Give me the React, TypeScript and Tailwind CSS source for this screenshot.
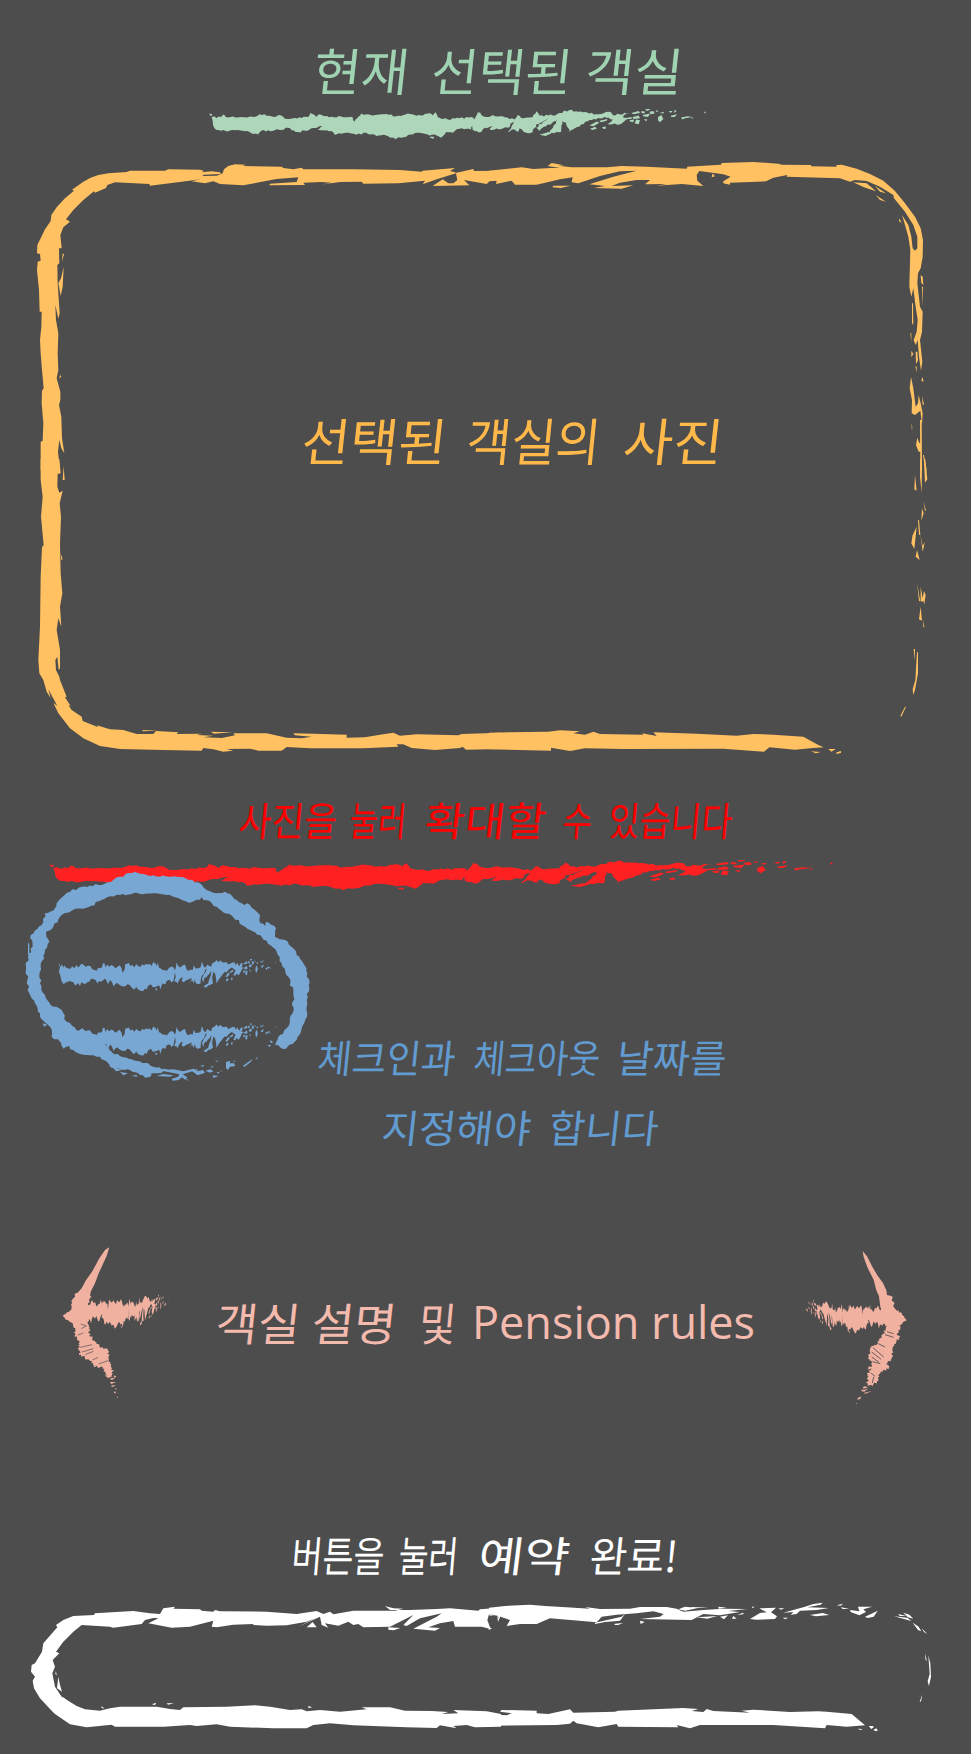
import React from "react";

/* Roughens a closed outline with a seeded jitter so edges look like chalk. */
function rough(points: string, amp: number, step: number, seed = 7): string {
  let s = seed;
  const rnd = () => {
    s = (s * 16807) % 2147483647;
    return s / 2147483647 - 0.5;
  };
  const pts = points.trim().split(/\s+/).map((p) => p.split(",").map(Number));
  const out: string[] = [];
  pts.forEach(([x, y], i) => {
    const [nx, ny] = pts[(i + 1) % pts.length];
    const len = Math.hypot(nx - x, ny - y);
    const n = Math.max(1, Math.round(len / step));
    for (let k = 0; k < n; k++) {
      const t = k / n;
      const off = k === 0 ? 0 : rnd() * amp * 2;
      out.push(
        `${(x + (nx - x) * t - ((ny - y) / (len || 1)) * off).toFixed(1)},${(y + (ny - y) * t + ((nx - x) / (len || 1)) * off).toFixed(1)}`
      );
    }
  });
  return out.join(" ");
}

const STROKE =
  "36,263 65,262 70,255 78,262 165,262 180,254 215,260 245,258 262,268 300,263 325,262 332,250 350,262 360,254 375,260 460,264 465,277 485,252 520,258 560,253 590,260 625,252 665,258 690,250 700,258 708,248 715,262 745,270 780,266 815,262 825,270 835,248 860,262 880,256 930,268 945,270 955,256 965,265 985,264 1000,262 1010,245 1020,258 1060,258 1080,250 1110,241 1150,248 1190,254 1235,248 1240,256 1290,250 1270,262 1300,264 1275,275 1260,285 1225,284 1240,270 1215,262 1190,270 1165,275 1120,300 1110,308 1100,280 1088,275 1085,308 1050,312 1075,270 1040,290 1020,305 1010,295 1045,265 1010,285 1000,308 980,310 960,296 955,308 945,300 925,308 950,270 925,295 870,300 880,290 850,300 845,308 820,302 825,275 815,300 780,298 760,310 740,308 725,325 705,315 690,318 660,310 640,315 620,322 590,328 560,318 530,320 500,310 470,316 440,310 405,316 395,305 355,300 370,290 330,300 295,308 265,295 240,302 185,304 175,315 130,304 50,302 40,285";

const STROKE_BITS =
  "M28 252l10 2-4 7zM1170 288l22-12 8 4-18 10zM1172 298l16-6 4 6-14 4zM1200 274l24-6-2 6-18 4zM1208 293l10-2 2 6-8 2zM1020 316l28-8 8 4-18 8zM1296 250l22-6 4 6-20 4zM1300 262l18-4 4 8-20 2zM1290 272l14-2-2 8-10-2zM1310 270l12 2-4 12-12-2zM1326 244l12 2-4 6-8-2zM1330 256l22-4-6 10-14-2zM1338 238l16-4-2 6-10 4zM1350 246l12-2 4 8-12 2zM1334 268l10 2-4 6zM1368 244l8-2-2 6zM1376 262l10-6 6 12-10 10-6-6zM1380 250l14-4-2 6zM1408 244l12 0-6 6zM1416 258l18-4-8 8-12 0zM1426 240l6 4-8 6zM1445 264l20-4 14 2-22 4-8 4zM1476 264l6 0-4 4zM1515 246l4 0 0 5-4 0zM580 324l12-2-4 8zM690 322l14 0-2 6-8-2z";

function Stroke({ className }: { className: string }) {
  return (
    <svg viewBox="28 238 1492 94" preserveAspectRatio="none" className={className} fill="currentColor">
      <polygon points={rough(STROKE, 3, 7)} />
      <path d={STROKE_BITS} />
    </svg>
  );
}

const FRAME_TL =
  "62,992 62,905 68,903 70,850 65,790 66,752 71,745 66,690 62,640 60,600 64,560 65,515 59,515 57,450 51,390 53,365 62,362 60,342 51,340 52,315 62,295 75,268 92,243 94,225 110,202 135,175 162,152 156,149 190,125 212,113 235,105 265,100 320,96 330,92 435,92 445,88 540,89 552,93 545,97 575,94 600,97 602,102 550,104 548,108 590,107 608,100 612,88 625,78 645,73 678,74 668,78 785,80 790,84 820,88 845,83 850,88 1000,88 1140,90 1205,95 1208,92 1305,84 1290,93 1310,98 1360,87 1362,93 1442,92 1442,130 1428,118 1410,122 1400,132 1332,120 1348,136 1238,138 1268,118 1285,130 1300,130 1312,120 1308,100 1250,118 1208,133 1215,122 1135,130 1030,131 1025,125 960,126 900,134 935,128 905,126 850,128 855,135 748,136 750,131 830,126 835,112 770,117 670,136 600,132 580,124 555,130 515,124 560,114 600,110 485,125 390,137 388,132 285,127 262,135 258,144 225,158 222,154 190,180 160,210 138,238 150,245 130,262 121,285 125,325 117,325 118,370 112,375 113,430 119,520 115,536 106,495 108,540 115,580 113,640 115,690 110,715 121,755 121,780 117,795 124,830 126,895 133,940 124,925 118,900 114,935 120,992";

const FRAME_TR =
  "-3,92 95,82 130,87 182,84 210,84 173,78 185,69 222,76 205,77 245,82 350,82 395,78 470,80 590,86 592,80 693,74 695,69 790,66 865,71 875,74 962,75 965,79 1040,80 1038,76 1055,74 1100,86 1140,102 1180,122 1215,153 1245,190 1275,230 1292,265 1299,300 1298,350 1292,385 1284,400 1282,430 1290,500 1298,515 1296,575 1290,600 1297,665 1293,692 1287,650 1283,600 1277,615 1271,600 1280,575 1283,540 1277,500 1270,445 1264,470 1258,440 1261,330 1255,290 1245,255 1236,225 1255,255 1264,290 1268,325 1275,332 1282,325 1282,290 1270,255 1245,215 1212,175 1210,165 1170,140 1130,123 1095,120 1080,125 1050,115 890,110 892,105 850,113 828,124 720,128 720,134 700,130 700,124 722,110 700,103 628,93 620,105 622,122 640,138 575,132 500,137 530,132 465,133 480,120 440,120 390,128 365,138 430,136 395,146 312,144 345,138 298,133 370,110 440,92 390,94 330,108 265,130 245,127 248,112 210,118 140,134 75,134 65,122 18,132 20,122 -3,124";

const FRAME_BR =
  "-3,818 175,815 210,811 270,814 250,820 285,824 310,815 330,822 460,824 457,820 500,828 490,817 620,821 740,827 790,822 850,824 940,830 985,855 1001,862 960,865 915,869 838,862 822,875 700,866 400,867 285,865 240,873 183,863 183,872 -3,868";

const FRAME_BL =
  "62,-3 62,60 68,110 63,170 71,255 66,262 62,350 60,500 55,600 58,640 70,660 80,695 92,715 85,688 112,738 100,728 115,760 150,805 190,835 240,858 300,867 430,870 545,872 550,864 580,868 610,875 640,872 620,867 690,866 715,872 785,872 800,861 870,865 1030,865 1135,860 1130,853 1150,853 1175,864 1245,870 1320,864 1328,860 1338,869 1443,867 1443,818 1325,822 1315,826 1190,823 1140,827 1120,818 1080,824 1035,832 980,833 980,824 880,821 820,820 825,826 875,830 845,835 800,833 740,820 640,820 645,826 605,834 550,832 580,827 530,825 545,821 470,822 475,817 408,813 400,822 350,822 310,810 270,808 230,796 235,802 188,783 185,770 155,750 145,735 152,738 135,712 140,710 120,660 118,650 108,630 106,600 112,590 116,630 120,625 120,570 110,510 115,475 124,500 120,440 127,400 122,340 120,250 123,170 119,130 128,92 118,98 112,80 113,42 122,40 118,-3";

function PhotoFrame() {
  return (
    <svg viewBox="0 150 971 630" className="col-start-1 row-start-1 h-[630px] w-[971px] text-[#ffc161]" fill="currentColor">
      <g transform="translate(20 140) scale(.33333)">
        <polygon points={FRAME_TL} />
        <path d="M131 380L128 440 122 468 115 430 123 415zM128 340l4 3-6 22zM120 705l4 4-6 8zM552 110l30 4-20 6zM615 121l24 1-14 2z" />
      </g>
      <g transform="translate(490 140) scale(.33333)">
        <polygon points={FRAME_TR} />
        <path d="M190 137l52 0-30 7-25-2zM668 100l7 9-10 3zM1090 127l40 3 28 24-38-13zM1155 138l33 22-18-5zM1157 165l31 20-18-5zM1228 235l7 13-8-4zM1292 405l6 5 2 25-6-6zM1266 490l3 0 1 65-4-5zM1296 440l3 0-1 60zM1261 580l3 0 0 25zM1264 632l6 10-6 10zM1277 635l5 0 2 25-6 13zM1276 678l4 2 0 18zM1263 710L1270 745 1277 800 1284 790 1286 765 1292 790 1298 820 1296 852 1291 812 1275 825 1265 820 1266 780 1259 745zM1297 710l4 15-7-3zM1296 768l6 25-4 2zM1264 850l3 10-1 12zM1282 893l6 17 8-10-4 35-6 0-8-20zM1290 840l5 0 1 152-5 0zM1299 945l3 0 8 47-4 0z" />
      </g>
      <g transform="translate(490 460) scale(.33333)">
        <polygon points={FRAME_BR} />
        <path d="M1291-2l5 0-1 102-5-50zM1302-2l4 0 6 60-7 10zM1275 45l5 47-7-4zM1300 123l8 29-3 0zM1296 145l5 15-7 22zM1284 180l3 0 4 45-4 0zM1280 200l-7 67-9-17 4-25zM1291 222l7 36 7-13-7 30zM1281 270l8 30-12-10zM1281 368l10 57-4-3zM1292 380l8 45-8-2zM1302 393l5 12-4 28-5-18zM1292 440l4 42-9-4zM1300 478l3 25-3-2zM1271 567l4 0-1 37zM1281 577l3 0 0 63-9 50-5 15-2-17 8-28zM1245 740l3 0-14 30-3-2zM962 874l30 2-14 4zM1015 867l22 0-13 8zM1040 877l13-4 0 6-14 3z" />
      </g>
      <g transform="translate(20 460) scale(.33333)">
        <polygon points={FRAME_BL} />
        <path d="M131 18l3 42-6 0zM122 280l6 18-4 2zM368 810l45 2-45 2zM572 815l65 2-55 4z" />
      </g>
    </svg>
  );
}

const BUTTON_L =
  "1443,293 1380,298 1375,302 1290,295 1250,297 1170,300 1110,300 1095,288 1120,295 1150,296 1125,302 1030,302 1000,302 940,313 930,305 910,312 890,303 830,312 740,305 600,304 585,300 580,305 545,302 540,298 460,296 465,290 430,295 420,312 390,310 340,303 225,310 222,315 160,318 130,330 108,345 112,352 70,400 66,425 45,460 35,465 33,485 45,500 38,512 42,535 60,565 90,597 105,612 150,643 200,652 275,644 285,650 430,650 510,645 530,648 590,643 630,650 760,655 860,655 880,645 930,640 1000,646 1160,652 1250,654 1260,646 1310,655 1300,648 1340,645 1365,652 1443,650 1443,612 1400,604 1300,600 1315,610 1265,612 1285,606 1235,603 1155,602 1110,592 1025,592 1040,598 960,605 900,600 860,604 845,598 810,600 750,590 705,586 620,590 490,592 480,600 450,597 410,590 300,590 270,595 240,602 195,598 170,588 125,560 105,530 97,490 105,470 98,450 118,430 108,425 130,395 160,365 185,345 270,350 280,353 365,342 375,330 415,320 385,322 415,325 385,340 455,353 510,350 580,332 575,350 590,352 640,344 700,342 700,345 740,347 800,346 860,335 885,325 835,350 900,320 905,345 925,353 915,340 955,347 985,335 1000,345 1015,342 1030,352 1110,350 1140,335 1180,315 1150,345 1160,348 1200,325 1265,310 1250,320 1180,356 1245,362 1260,354 1225,352 1260,340 1300,333 1305,350 1385,350 1412,357 1402,330 1408,310 1443,312";

const BUTTON_RT =
  "-3,293 45,288 120,284 165,288 228,292 300,296 285,291 330,297 420,296 450,291 530,291 560,296 580,305 640,300 700,296 770,297 715,303 750,306 690,316 640,312 605,330 450,327 510,320 521,312 490,304 440,310 380,314 335,320 320,337 180,325 140,342 90,342 50,348 60,330 25,318 -3,312";

const BUTTON_RB =
  "-3,613 50,616 65,610 30,605 35,600 140,602 140,610 175,612 240,598 250,608 375,605 385,602 580,594 625,597 605,603 640,606 650,597 670,603 780,608 755,602 790,599 900,606 985,604 1010,605 1085,612 1118,640 1125,646 1070,650 1010,645 1005,655 850,645 630,645 600,655 560,645 565,652 385,650 380,642 325,652 260,640 250,632 240,641 200,645 -3,647";

function ButtonOutline() {
  return (
    <svg viewBox="0 1600 971 154" className="h-[154px] w-[971px] text-white" fill="currentColor">
      <g transform="translate(20 1510) scale(.33333)">
        <polygon points={BUTTON_L} />
        <path d="M115 500l5 25 6 20-15-10zM108 482l2 15-4-6zM128 560l22 18-14-4zM860 352l18-16 12 16zM1105 352l36 2-20 7-16-2zM1405 312l20 3-15 2zM1432 318l8 0 0 8zM395 583l14-5-4 7zM440 580l22 0-18 4zM245 588l8 8-8-2zM865 588l12 4-12 2z" />
      </g>
      <g transform="translate(490 1510) scale(.33333)">
        <polygon points={BUTTON_RT} />
        <path d="M315 338l80-18 10-8-15 20-45 4-30 6zM375 341l24-2-14 6-12 0zM450 332l14 4-12 6zM565 298l20-8 40 4-40 8zM605 291l50 2-48 2zM685 290l25 3-24 3zM620 322l62-4-30 8zM690 320l24-4-12 12zM730 318l10 8-14 0zM742 316l16-8 4 4zM785 290l8 0-4 5zM780 327l30-18 20-2-22-12 50-2-15 14 18 12-6 8-55 2zM878 323l16 0-8 5zM865 295l18 0-10 4zM880 308l30-8 35-10 25-8 28-4-6 6-40 8 64 2-36 6-50 2-10 10-18 2 8-8zM960 315l38-6 20 6-40 4zM1040 286l20-5-8 6zM1052 292l26 4-20 1zM1080 300l28 4-4-14 42 0-26 8 8 8-20 10-26-10zM1125 320l18-8 20-10-12 18-18 4zM1240 308l18 6 12 12-16-4zM1212 319l40 4 12 10-30-8zM1225 312l24 6-20 0zM1268 338l18 12 8 14-10-4zM1295 355l12 12 5 5-10-6zM1306 430l4 24-4-6zM1315 436l6 24 2 40-6 28-4-14 6-22zM1297 554l-4 20-4 2 4-12zM1102 656l16 1-6 3zM1136 648l12 0 4 3-8 6zM1150 660l8-5 6 6-6 3zM22 318l6 8-4 10zM-4 352l10 3-10 5z" />
        <polygon points={BUTTON_RB} />
      </g>
    </svg>
  );
}

const LOOP =
  "766,796 780,802 798,806 830,780 845,745 862,700 860,660 868,625 862,580 850,550 830,525 820,505 795,480 765,470 768,445 738,425 735,438 722,430 720,405 690,375 665,370 650,360 615,335 590,340 560,330 540,310 500,297 470,290 420,290 380,285 345,275 300,290 280,300 235,315 185,320 150,335 110,370 105,385 75,400 65,435 32,465 38,500 24,530 18,560 22,600 28,640 45,670 60,710 90,740 95,770 130,790 160,810 200,825 240,830 280,865 330,870 360,885 385,892 395,880 460,870 425,868 400,860 385,850 350,843 310,832 275,815 255,790 230,765 170,752 140,725 125,690 100,680 75,645 60,610 62,560 75,510 88,485 78,455 100,440 120,410 155,392 205,382 245,360 300,345 350,338 400,340 450,345 515,367 545,352 590,380 640,412 690,450 720,465 770,515 785,550 805,590 820,640 818,700 800,745 780,765";

function DateLoop() {
  return (
    <svg viewBox="20 860 300 225" className="h-[225px] w-[300px] shrink-0 text-[#79a7d3]" fill="currentColor">
      <g transform="translate(20 780) scale(.33333)">
        <polygon points={rough(LOOP, 4, 9)} />
        <path d="M24 485l4 10 0 24 14 0-2 8-16-2zM742 794l12 2-6 5zM750 780l10 6-8 4zM68 730l14 4-10 6zM278 862l30 8-20 4zM300 876l24 4-14 6zM335 888l14-4 4 6zM410 888l20-6 30 4-10 4zM425 872l35-4 30 6 30-8 10 4-40 12-15 0zM455 896l20-6 5-16 12 12 10 6-6 8-10-8-10 8-18 2zM500 898l4 0-2 6zM515 872l18-4-2 6 18-4 6 8-22 8zM540 858l12-4-2 6zM556 872l16-4 8 6-10 4zM575 858l6 2-8 4zM578 886l18 2-16 6zM590 876l8 0-2 6zM585 842l10 0-4 4zM600 872l4 0 0 5zM618 846l14-4-4 8 14 0 4 8-16 2-6 10-6-6zM640 842l6 0-3 5zM668 858l12-8 18-14-6 10-18 14zM706 836l8-6-4 8z" />
      </g>
      <svg x="58.5" y="959" width="218" height="33" viewBox="28 238 1492 94" preserveAspectRatio="none">
        <polygon points={rough(STROKE, 8, 14, 5)} />
        <path d={STROKE_BITS} />
      </svg>
      <svg x="58.5" y="1023.500" width="218" height="33" viewBox="28 238 1492 94" preserveAspectRatio="none">
        <polygon points={rough(STROKE, 8, 14, 5)} />
        <path d={STROKE_BITS} />
      </svg>
    </svg>
  );
}

function LeftArrow() {
  return (
    <svg viewBox="60 75 330 465" className="h-[155px] w-[110px] shrink-0 text-[#f0b1a0]" fill="currentColor">
      <polygon points="208,82 200,108 176,160 165,190 152,215 148,240 138,262 150,268 140,290 115,302 80,300 68,287 95,270 97,242 110,222 125,205 137,182 158,152 178,115 195,90" />
      <polygon points={rough("72,290 95,268 97,240 112,218 125,206 152,222 142,262 148,300 146,320 152,350 178,375 204,392 206,425 216,445 222,462 205,474 195,455 182,440 165,440 148,420 118,405 120,380 116,362 104,350 106,325 95,308", 5, 4, 11)} />
      <path d="M196 452l20 6-18 4zM194 466l24 2-14 6zM208 476l20-4-12 8zM210 486l18 0-14 6zM212 497l16-2-10 6zM220 515l8 0-2 6zM226 505l4 0-2 6zM160 438l16-6-12 10zM230 530l4 0 0 4zM190 444l24-6-20 10zM222 466l8 4-8 2z" />
      <path stroke="#4d4d4d" strokeWidth="2" fill="none" d="M122 312l18 6M124 326l14-8M114 345l16-6M120 382l36-8M126 396l34-10M136 404l24-10M158 420l16-8M176 432l28-10" />
      <svg x="128" y="224" width="258" height="106" viewBox="28 238 1492 94" preserveAspectRatio="none">
        <polygon points={rough(STROKE, 8, 22, 5)} />
        <path d={STROKE_BITS} />
      </svg>
    </svg>
  );
}

function RightArrow() {
  return (
    <svg viewBox="935 88 330 465" className="h-[155px] w-[110px] shrink-0 text-[#f0b1a0]" fill="currentColor">
      <polygon points="1117,94 1130,110 1148,145 1162,168 1178,190 1188,212 1190,226 1200,228 1210,265 1235,285 1249,302 1225,314 1185,300 1170,262 1166,230 1158,212 1150,180 1132,145 1120,112" />
      <polygon points={rough("1200,228 1212,265 1235,285 1246,302 1228,318 1222,340 1226,355 1207,385 1208,410 1192,428 1196,445 1170,460 1160,485 1145,500 1132,492 1133,465 1143,435 1136,410 1140,385 1163,370 1178,342 1190,320 1170,310 1172,270", 5, 4, 23)} />
      <path d="M1135 440l14 4-16 6zM1130 465l18-4-14 10zM1126 488l24-6-14 10zM1120 500l14 2-16 6zM1114 514l20-8-12 10zM1120 520l24-6-18 8zM1112 510l8 0-4 6zM1100 538l10-8 2 6-8 4zM1096 550l3 0 0 5z" />
      <path stroke="#4d4d4d" strokeWidth="2.500" fill="none" d="M1184 345l26 8M1190 336l20 6M1164 372l20 10M1148 384l32 28M1144 397l28 22M1144 412l22 16M1146 426l24 6M1142 460l12 10M1150 472l-4 18" />
      <g transform="translate(2120 0) scale(-1 1)">
        <svg x="930" y="242" width="250" height="104" viewBox="28 238 1492 94" preserveAspectRatio="none">
          <polygon points={rough(STROKE, 8, 22, 5)} />
          <path d={STROKE_BITS} />
        </svg>
      </g>
    </svg>
  );
}

/* A line of lettering; every word carries its own width and stretch. */
function Line({ words, className }: { words: [string, string][]; className: string }) {
  return (
    <p className={`flex whitespace-nowrap leading-none ${className}`}>
      {words.map(([word, cls], i) => (
        <span key={i} className={`block shrink-0 origin-left ${cls}`}>
          {word}
          {i < words.length - 1 ? " " : ""}
        </span>
      ))}
    </p>
  );
}

export default function App() {
  return (
    <main className="flex h-[1754px] w-[971px] flex-col overflow-hidden bg-[#4d4d4d] font-['Noto_Sans_CJK_KR',sans-serif]">
      <header className="h-[150px] pt-[44px]">
        <Line
          className="ml-[313px] h-[65px] text-[51px] text-[#a0d3b1]"
          words={[
            ["현재", "w-[118px] -skew-x-6 scale-x-[1.02]"],
            ["선택된", "w-[154px] -skew-x-6"],
            ["객실", "w-[100px] -skew-x-6 scale-x-[1.04]"],
          ]}
        />
        <Stroke className="ml-[209px] h-[31px] w-[497px] text-[#aed6ba]" />
      </header>

      <section className="grid h-[630px]">
        <PhotoFrame />
        <Line
          className="col-start-1 row-start-1 ml-[302px] pt-[264px] text-[51px] text-[#ffb84a]"
          words={[
            ["선택된", "h-[51px] w-[165px] -skew-x-6 scale-x-[1.03]"],
            ["객실의", "h-[51px] w-[157px] -skew-x-6 scale-x-[0.95]"],
            ["사진", "h-[51px] -skew-x-6 scale-x-[1.06]"],
          ]}
        />
      </section>

      <section className="h-[80px] pt-[19px]">
        <Line
          className="ml-[239px] text-[40px] text-[#ff0000]"
          words={[
            ["사진을", "w-[111px] -skew-x-6 scale-x-[0.89]"],
            ["눌러", "w-[75px] -skew-x-6 scale-x-[0.77]"],
            ["확대할", "w-[138px] -skew-x-6 scale-x-[1.1]"],
            ["수", "w-[46px] -skew-x-6 scale-x-[0.8]"],
            ["있습니다", "-skew-x-6 scale-x-[0.84]"],
          ]}
        />
      </section>
      <Stroke className="ml-[49px] h-[31px] w-[784px] shrink-0 text-[#ff2121]" />

      <section className="-mt-[31px] flex h-[360px]">
        <div className="ml-[20px] flex">
          <DateLoop />
        </div>
        <div className="-ml-[2px] pt-[177px] text-[#629bd0]">
          <Line
            className="text-[39px]"
            words={[
              ["체크인과", "w-[156px] -skew-x-6 scale-x-[0.96]"],
              ["체크아웃", "w-[143px] -skew-x-6 scale-x-[0.88]"],
              ["날짜를", "-skew-x-6 scale-x-[1.02]"],
            ]}
          />
          <Line
            className="mt-[31px] ml-[64px] text-[39px]"
            words={[
              ["지정해야", "w-[167px] -skew-x-6 scale-x-[1.04]"],
              ["합니다", "-skew-x-6 scale-x-[1.02]"],
            ]}
          />
        </div>
      </section>

      <section className="flex h-[290px] pt-[25px]">
        <div className="ml-[60px]">
          <LeftArrow />
        </div>
        <Line
          className="ml-[46px] w-[586px] pt-[54px] text-[45px] text-[#f4baad]"
          words={[
            ["객실", "h-[45px] w-[96px] -skew-x-6 scale-x-[1.02]"],
            ["설명", "h-[45px] w-[107px] -skew-x-6 scale-x-[1.02]"],
            ["및", "h-[45px] w-[53px] -skew-x-6 scale-x-[0.9]"],
            ["Pension", "h-[45px] w-[179px] font-['Open_Sans',sans-serif]"],
            ["rules", "h-[45px] font-['Open_Sans',sans-serif]"],
          ]}
        />
        <div className="pt-[4px]">
          <RightArrow />
        </div>
      </section>

      <section className="h-[90px] pt-[23px]">
        <Line
          className="ml-[292px] text-[42px] text-white"
          words={[
            ["버튼을", "w-[107px] -skew-x-6 scale-x-[0.8]"],
            ["눌러", "w-[80px] -skew-x-6 scale-x-[0.77]"],
            ["예약", "w-[111px] -skew-x-6 scale-x-[1.18]"],
            ["완료!", "-skew-x-6 scale-x-[0.97]"],
          ]}
        />
      </section>
      <ButtonOutline />
    </main>
  );
}
